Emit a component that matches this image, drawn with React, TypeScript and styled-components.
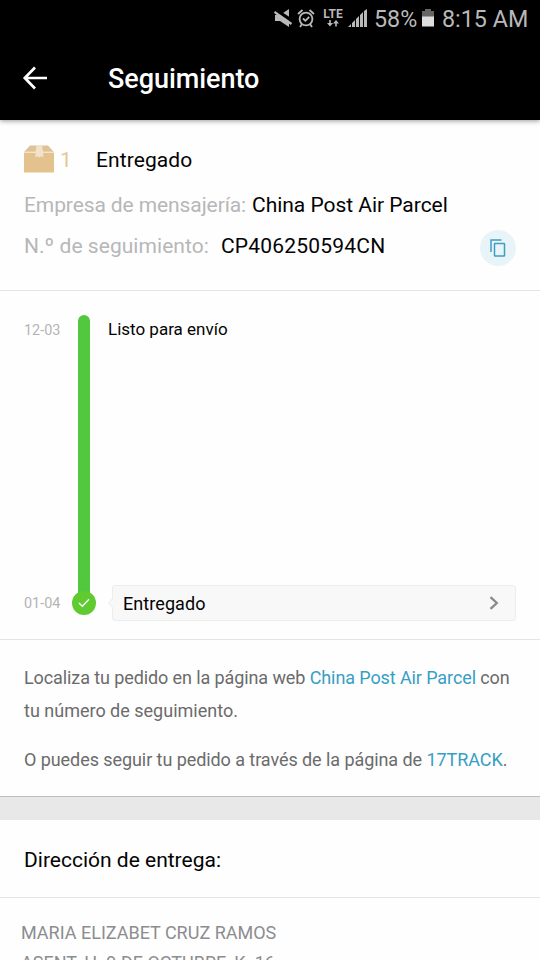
import { FC } from "react";
import styled, { createGlobalStyle } from "styled-components";

const GlobalStyle = createGlobalStyle`
  * {
    box-sizing: border-box;
  }
  body {
    margin: 0;
    background: #fff;
    font-family: Roboto, "Liberation Sans", sans-serif;
  }
`;

const Screen = styled.div`
  display: flex;
  flex-direction: column;
  width: 540px;
  height: 960px;
  overflow: hidden;
  background: #fefefe;
  color: #030303;
`;

const StatusBar = styled.div`
  display: flex;
  flex: none;
  align-items: center;
  height: 36px;
  padding: 1px 0 0 274px;
  background: #000;
  color: #b9b9b9;
  svg {
    display: block;
    flex: none;
  }
`;

const StatusText = styled.span<{ $width: number; $pad: number }>`
  flex: none;
  width: ${({ $width }) => $width}px;
  padding-left: ${({ $pad }) => $pad}px;
  font-size: 23.3px;
  line-height: 32px;
  white-space: nowrap;
`;

const Network = styled.div`
  display: flex;
  flex: none;
  flex-direction: column;
  align-items: center;
  width: 20px;
  margin: 0 5px 1px 7px;
  span {
    font-size: 12px;
    font-weight: 700;
    line-height: 11px;
  }
`;

const AppBar = styled.header`
  display: flex;
  flex: none;
  align-items: center;
  height: 84px;
  padding-left: 22px;
  background: #000;
  color: #fff;
  box-shadow: 0 1px 5px rgba(0, 0, 0, 0.4);
  z-index: 1;
  h1 {
    margin: 2px 0 0 60px;
    font-size: 27px;
    font-weight: 500;
    line-height: 36px;
    letter-spacing: -0.05px;
  }
`;

const Section = styled.section<{ $height: number; $line?: string }>`
  display: flex;
  flex: none;
  flex-direction: column;
  height: ${({ $height }) => $height}px;
  border-bottom: 1px solid ${({ $line }) => $line || "#e4e4e4"};
`;

const Summary = styled(Section)`
  padding: 19px 24px 0;
`;

const SummaryRow = styled.div<{ $height: number }>`
  display: flex;
  align-items: center;
  height: ${({ $height }) => $height}px;
  font-size: 21px;
  white-space: nowrap;
`;

const Text = styled.span<{ $spacing?: number }>`
  letter-spacing: ${({ $spacing }) => $spacing || 0}px;
`;

const Count = styled.span`
  width: 42px;
  padding-left: 6px;
  color: #e5c796;
`;

const Label = styled(Text)<{ $width: number }>`
  width: ${({ $width }) => $width}px;
  color: #b6b7b8;
`;

const CopyButton = styled.button`
  display: flex;
  align-items: center;
  justify-content: center;
  width: 36px;
  height: 36px;
  margin: 4px 0 0 auto;
  padding: 0;
  border: 0;
  border-radius: 50%;
  background: #e9f4f8;
`;

const Timeline = styled(Section)`
  flex-direction: row;
  padding: 24px 24px 0;
`;

const Dates = styled.div`
  display: flex;
  flex-direction: column;
  justify-content: space-between;
  width: 48px;
  height: 302px;
  padding: 6px 0 3px;
  font-size: 14.4px;
  line-height: 20px;
  color: #b4b4b4;
`;

const Track = styled.div`
  display: flex;
  flex-direction: column;
  align-items: center;
  width: 24px;
`;

const Bar = styled.div`
  width: 12px;
  height: 280px;
  margin-bottom: -4px;
  border-radius: 6px 6px 0 0;
  background: #52c83e;
`;

const Dot = styled.div`
  display: flex;
  align-items: center;
  justify-content: center;
  width: 24px;
  height: 24px;
  border-radius: 50%;
  background: #5fcb30;
`;

const Events = styled.div`
  display: flex;
  flex: 1;
  flex-direction: column;
  justify-content: space-between;
  height: 306px;
  padding-left: 12px;
`;

const FirstEvent = styled.div`
  padding-top: 2px;
  font-size: 17px;
  line-height: 24px;
`;

const EventRow = styled.div`
  display: flex;
  align-items: center;
  svg {
    flex: none;
  }
`;

const Pointer = styled.svg`
  position: relative;
  z-index: 1;
`;

const EventCard = styled.div`
  display: flex;
  flex: 1;
  align-items: center;
  justify-content: space-between;
  height: 36px;
  margin-left: -1px;
  padding: 0 16px 0 10px;
  border: 1px solid #ededed;
  border-radius: 3px;
  background: #f8f8f8;
  font-size: 18px;
`;

const Help = styled(Section)`
  padding: 21px 24px 0;
  color: #6b6b6b;
  font-size: 18px;
  line-height: 33px;
  p {
    margin: 0 0 16px;
    white-space: nowrap;
  }
  a {
    color: #379fc3;
  }
`;

const Divider = styled.div`
  flex: none;
  height: 23px;
  background: #e8e8e8;
`;

const AddressTitle = styled(Section)`
  justify-content: center;
  padding: 2px 24px 0;
  font-size: 21px;
`;

const Address = styled.div`
  padding: 20px 21px 0;
  color: #8c8d8f;
  font-size: 18px;
  line-height: 30px;
  white-space: nowrap;
`;

const MuteIcon = () => (
  <svg width="20" height="20" viewBox="0 0 20 20">
    <path d="M1 6h5l9-6v18l-9-6H1z" fill="#b9b9b9" />
    <path d="M1 0.500l18 12" stroke="#000" strokeWidth="3.500" />
    <path d="M0.500 3l17 12" stroke="#b9b9b9" strokeWidth="2.200" />
  </svg>
);

const AlarmIcon = () => (
  <svg width="22" height="22" viewBox="-4 0 22 22" fill="none" stroke="#b9b9b9" strokeWidth="1.8">
    <circle cx="8" cy="11" r="6.400" />
    <path d="M5 10.500l2.400 2.300 3.800-4M0 6L4.500 2M16 6L11.500 2M4 16l-2 3M12 16l2 3" />
  </svg>
);

const SignalIcon = () => (
  <svg width="19" height="19" viewBox="0 0 19 19" fill="#b9b9b9">
    <path d="M0 18l3-3v3zM4 14l3-3v7H4zM8 10l3-3v11H8zM12 6l3-3v15h-3zM16 2L19 0v18h-3z" />
  </svg>
);

const BatteryIcon = () => (
  <svg width="12" height="20" viewBox="0 0 12 20">
    <path d="M0 2h3V0h6v2h3v6H0z" fill="#656565" />
    <path d="M0 7.500h12v10H0z" fill="#dedede" />
  </svg>
);

const BoxIcon = () => (
  <svg width="30" height="30" viewBox="0 0 30 30">
    <path d="M6 0.500h18l6 6.500H0z" fill="#dfc397" />
    <path d="M0 7.300h30V27.500H0z" fill="#e4c28e" />
    <path d="M0 7.200h30" stroke="#f6ead8" />
    <path d="M12.500 0.500h5.500l1.200 7v5l-2-1.200-2 1.200-1.900-1.200-1.800 1.200V7z" fill="#f0e2cb" />
  </svg>
);

const App: FC = () => {
  return (
    <>
      <GlobalStyle />
      <Screen>
        <StatusBar>
          <MuteIcon />
          <AlarmIcon />
          <Network>
            <span>LTE</span>
            <svg width="12" height="7" viewBox="0 0 12 7">
              <path
                d="M2.200 0h1.600v3H6L3 6.500 0 3h2.200zM8.200 6.500h1.600v-3H12L9 0 6 3.500h2.200z"
                fill="#b9b9b9"
              />
            </svg>
          </Network>
          <SignalIcon />
          <StatusText $width={55} $pad={7}>
            58%
          </StatusText>
          <BatteryIcon />
          <StatusText $width={98} $pad={8}>
            8:15 AM
          </StatusText>
        </StatusBar>
        <AppBar>
          <svg width="26" height="26" viewBox="0 0 26 26" fill="none">
            <path d="M13 2.500L2.800 13 13 23.500M3 13h22" stroke="#fff" strokeWidth="2.700" />
          </svg>
          <h1>Seguimiento</h1>
        </AppBar>

        <Summary $height={171}>
          <SummaryRow $height={42}>
            <BoxIcon />
            <Count>1</Count>
            <Text $spacing={0.1}>Entregado</Text>
          </SummaryRow>
          <SummaryRow $height={48}>
            <Label $width={228} $spacing={-0.1}>
              Empresa de mensajería:
            </Label>
            <Text $spacing={-0.03}>China Post Air Parcel</Text>
          </SummaryRow>
          <SummaryRow $height={34}>
            <Label $width={197} $spacing={0.05}>
              N.º de seguimiento:
            </Label>
            <Text $spacing={0.2}>CP406250594CN</Text>
            <CopyButton>
              <svg width="16" height="18" viewBox="0 0 16 18" fill="none" stroke="#3b9fc4" strokeWidth="1.500">
                <path d="M1 13V1h10.500" />
                <rect x="4.500" y="4.500" width="10" height="12.500" rx="0.500" />
              </svg>
            </CopyButton>
          </SummaryRow>
        </Summary>

        <Timeline $height={349}>
          <Dates>
            <span>12-03</span>
            <span>01-04</span>
          </Dates>
          <Track>
            <Bar />
            <Dot>
              <svg width="12" height="10" viewBox="0 0 12 10" fill="none">
                <path d="M1 5l3.300 3.300L11 1.200" stroke="#fff" strokeWidth="1.300" />
              </svg>
            </Dot>
          </Track>
          <Events>
            <FirstEvent>Listo para envío</FirstEvent>
            <EventRow>
              <Pointer width="5" height="10" viewBox="0 0 5 10">
                <path d="M5 0L0.500 5 5 10" fill="#f8f8f8" stroke="#ededed" />
              </Pointer>
              <EventCard>
                <Text $spacing={0.08}>Entregado</Text>
                <svg width="10" height="14" viewBox="0 0 10 14" fill="none">
                  <path d="M1.500 1.200L7.800 7l-6.300 5.800" stroke="#8a8a8a" strokeWidth="2.300" />
                </svg>
              </EventCard>
            </EventRow>
          </Events>
        </Timeline>

        <Help $height={157} $line="#bdbfbd">
          <p>
            <Text $spacing={-0.1}>
              Localiza tu pedido en la página web <a>China Post Air Parcel</a> con
            </Text>
            <br />
            tu número de seguimiento.
          </p>
          <p>
            <Text $spacing={-0.07}>
              O puedes seguir tu pedido a través de la página de <a>17TRACK</a>.
            </Text>
          </p>
        </Help>
        <Divider />

        <AddressTitle $height={78}>Dirección de entrega:</AddressTitle>
        <Address>
          <div>MARIA ELIZABET CRUZ RAMOS</div>
          <div>ASENT. H. 9 DE OCTUBRE, K. 16</div>
        </Address>
      </Screen>
    </>
  );
};

export default App;
